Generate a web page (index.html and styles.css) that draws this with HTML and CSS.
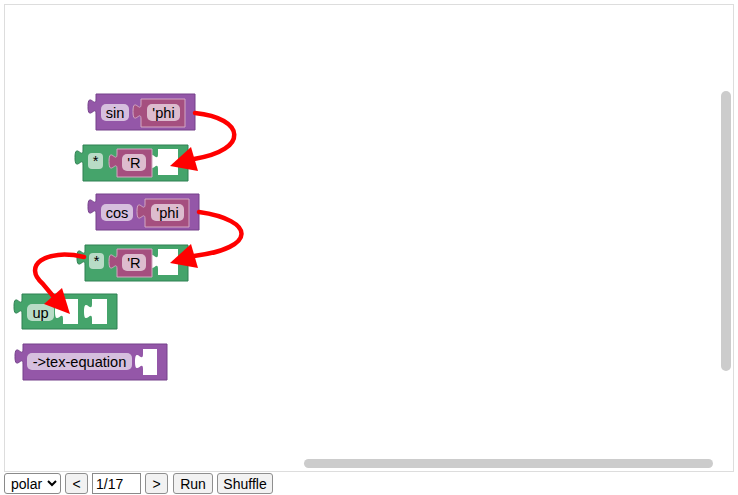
FILE: index.html
```html
<!DOCTYPE html>
<html>
<head>
<meta charset="utf-8">
<link rel="stylesheet" href="styles.css">
</head>
<body>
<div class="ws">
  <svg class="canvas" width="728" height="466" viewBox="5 5 728 466" xmlns="http://www.w3.org/2000/svg">
    <!-- sin block -->
    <g class="purple">
      <path class="body" d="M96,94 H195 V130 H96 V114 c0,-10 -8,8 -8,-7.5 s8,2.5 8,-7.5 Z"/>
      <rect class="pill" x="101" y="104" width="28" height="17" rx="5"/>
      <text x="115" y="117.5">sin</text>
    </g>
    <g class="pink">
      <path class="body" d="M141,99 H185 V127 H141 V119 c0,-10 -8,8 -8,-7.5 s8,2.5 8,-7.5 Z"/>
      <rect class="pill" x="147" y="104" width="33" height="17" rx="5"/>
      <text x="163.5" y="117.5">'phi</text>
    </g>

    <!-- * block 1 -->
    <g class="green">
      <path class="body" d="M83,145 H188 V181 H83 V165 c0,-10 -8,8 -8,-7.5 s8,2.5 8,-7.5 Z"/>
      <path class="hole" d="M158,149 H178 V175 H158 V169 c0,-10 -8,8 -8,-7.5 s8,2.5 8,-7.5 Z"/>
      <rect class="pill" x="88" y="153" width="15" height="16" rx="4"/>
      <text x="95.5" y="166">*</text>
    </g>
    <g class="pink">
      <path class="body" d="M117,149 H152 V177 H117 V169 c0,-10 -8,8 -8,-7.5 s8,2.5 8,-7.5 Z"/>
      <rect class="pill" x="122" y="154" width="24" height="17" rx="5"/>
      <text x="134" y="167.5">'R</text>
    </g>

    <!-- cos block -->
    <g class="purple">
      <path class="body" d="M96,194 H199 V230 H96 V214 c0,-10 -8,8 -8,-7.5 s8,2.5 8,-7.5 Z"/>
      <rect class="pill" x="101" y="204" width="32" height="17" rx="5"/>
      <text x="117" y="217.5">cos</text>
    </g>
    <g class="pink">
      <path class="body" d="M145,199 H189 V227 H145 V219 c0,-10 -8,8 -8,-7.5 s8,2.5 8,-7.5 Z"/>
      <rect class="pill" x="151" y="204" width="33" height="17" rx="5"/>
      <text x="167.5" y="217.5">'phi</text>
    </g>

    <!-- * block 2 -->
    <g class="green">
      <path class="body" d="M85,245 H188 V281 H85 V265 c0,-10 -8,8 -8,-7.5 s8,2.5 8,-7.5 Z"/>
      <path class="hole" d="M158,249 H178 V275 H158 V269 c0,-10 -8,8 -8,-7.5 s8,2.5 8,-7.5 Z"/>
      <rect class="pill" x="89" y="253" width="15" height="16" rx="4"/>
      <text x="96.5" y="266">*</text>
    </g>
    <g class="pink">
      <path class="body" d="M117,249 H152 V277 H117 V269 c0,-10 -8,8 -8,-7.5 s8,2.5 8,-7.5 Z"/>
      <rect class="pill" x="122" y="254" width="24" height="17" rx="5"/>
      <text x="134" y="267.5">'R</text>
    </g>

    <!-- up block -->
    <g class="green">
      <path class="body" d="M22,294 H117 V329 H22 V314 c0,-10 -8,8 -8,-7.5 s8,2.5 8,-7.5 Z"/>
      <path class="hole" d="M63,299 H78 V324 H63 V319 c0,-10 -8,8 -8,-7.5 s8,2.5 8,-7.5 Z"/>
      <path class="hole" d="M92,299 H107 V324 H92 V319 c0,-10 -8,8 -8,-7.5 s8,2.5 8,-7.5 Z"/>
      <rect class="pill" x="27" y="304" width="27" height="17" rx="5"/>
      <text x="40.5" y="317.5">up</text>
    </g>

    <!-- ->tex-equation block -->
    <g class="purple">
      <path class="body" d="M23,344 H167 V380 H23 V364 c0,-10 -8,8 -8,-7.5 s8,2.5 8,-7.5 Z"/>
      <path class="hole" d="M143,349 H157 V375 H143 V369 c0,-10 -8,8 -8,-7.5 s8,2.5 8,-7.5 Z"/>
      <rect class="pill" x="27" y="353" width="105" height="17" rx="5"/>
      <text x="79.5" y="366.5">-&gt;tex-equation</text>
    </g>

    <!-- arrows -->
    <g class="arrow">
      <path class="line" d="M195,113 C245,118 250,150 194,159"/>
      <polygon class="head" points="191,147 198,171 170,166"/>
      <path class="line" d="M199,212 C255,220 258,248 194,256"/>
      <polygon class="head" points="191,244 198,268 170,263"/>
      <path class="line" d="M84,257 C45,248 22,266 43,284 L53,296"/>
      <polygon class="head" points="44,304 62,288 70,314"/>
    </g>
  </svg>
  <div class="vscroll"></div>
  <div class="hscroll"></div>
</div>
<div class="controls">
  <select class="sel"><option>polar</option></select>
  <button class="btn btn-sm">&lt;</button>
  <input class="field" type="text" value="1/17">
  <button class="btn btn-sm">&gt;</button>
  <button class="btn btn-run">Run</button>
  <button class="btn btn-shuffle">Shuffle</button>
</div>
</body>
</html>
```
FILE: styles.css
```css
html, body {
  margin: 0;
  padding: 0;
  background: #fff;
}
body {
  padding: 4px;
  font-family: "Liberation Sans", Arial, sans-serif;
}
.ws {
  position: relative;
  width: 728px;
  height: 466px;
  border: 1px solid #dddddd;
  overflow: hidden;
}
.canvas {
  display: block;
}
.canvas text {
  font-family: "Liberation Sans", Arial, sans-serif;
  font-size: 14.6px;
  fill: #000;
  text-anchor: middle;
}
.purple .body { fill: #9457a8; stroke: #74408a; stroke-width: 1; }
.green .body { fill: #45a46b; stroke: #2f8052; stroke-width: 1; }
.pink .body { fill: #a54f7f; stroke: #d3a8c2; stroke-width: 1; }
.pill { fill: rgba(255,255,255,0.62); }
.hole { fill: #fff; }
.arrow .line { fill: none; stroke: #ff0000; stroke-width: 4.5; stroke-linecap: round; }
.arrow .head { fill: #ff0000; }
.vscroll {
  position: absolute;
  left: 716px;
  top: 86px;
  width: 10px;
  height: 280px;
  border-radius: 5px;
  background: #cccccc;
}
.hscroll {
  position: absolute;
  left: 299px;
  top: 454px;
  width: 409px;
  height: 9px;
  border-radius: 5px;
  background: #cccccc;
}
.controls {
  display: flex;
  gap: 4px;
  margin-top: 1px;
  align-items: center;
}
.sel, .btn, .field {
  font-family: "Liberation Sans", Arial, sans-serif;
  font-size: 14px;
  height: 21px;
  box-sizing: border-box;
  color: #000;
}
.sel {
  width: 57px;
  border: 1px solid #8a8a8a;
  border-radius: 3px;
  background: #fff;
  padding: 0 0 0 2px;
}
.btn {
  background: #f2f2f2;
  border: 1px solid #8f8f8f;
  border-radius: 3px;
  padding: 0 6px;
}
.btn-sm { width: 23px; padding: 0; }
.btn-run { width: 40px; margin-left: 1px; padding: 0; }
.btn-shuffle { width: 56px; padding: 0; }
.field {
  width: 49px;
  border: 1px solid #8a8a8a;
  padding: 0 3px;
  background: #fff;
}
```
